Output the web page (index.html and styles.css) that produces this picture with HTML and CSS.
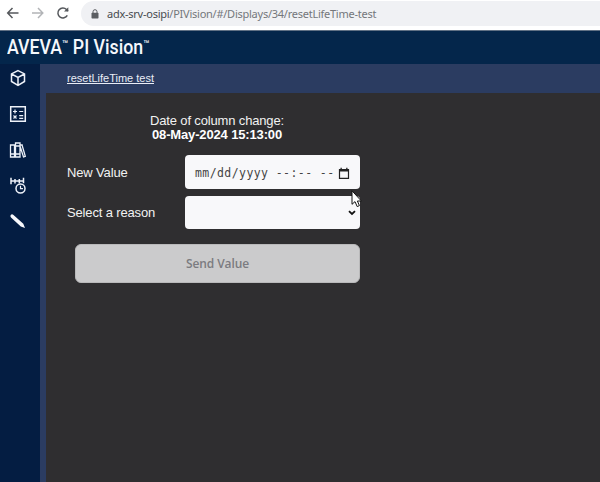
FILE: index.html
```html
<!DOCTYPE html>
<html lang="en">
<head>
<meta charset="utf-8">
<title>AVEVA PI Vision</title>
<link rel="stylesheet" href="styles.css">
</head>
<body>
<div class="browser">
  <svg class="nav" width="14" height="14" viewBox="0 0 14 14"><path d="M12.500 7H2M6.500 2L1.700 7l4.800 5"/></svg>
  <svg class="nav muted" width="14" height="14" viewBox="0 0 14 14"><path d="M1 7h10.500M7 2l4.800 5L7 12"/></svg>
  <svg class="nav reload" width="14" height="14" viewBox="0 0 14 14"><path d="M11.300 9.300A5 5 0 1 1 10.500 3.400L12 5"/><path d="M12.300 1.200v4.300H8z" class="solid"/></svg>
  <div class="address">
    <svg class="lock" width="8" height="10" viewBox="0 0 8 10"><path d="M2 4V2.700a2 2 0 0 1 4 0V4"/><rect x="0.500" y="3.700" width="7" height="5.800" rx="0.700"/></svg>
    <span class="url"><span class="host">adx-srv-osipi</span>/PIVision/#/Displays/34/resetLifeTime-test</span>
  </div>
</div>
<header class="header"><h1 class="brand">AVEVA<span class="tm">™</span> PI Vision<span class="tm">™</span></h1></header>
<div class="workspace">
  <nav class="sidebar">
    <svg width="18" height="18" viewBox="0 0 18 18"><path d="M9 1.700l6.500 3.200v7.600L9 16.300l-6.500-3.800V4.900zM2.500 5L9 8.300 15.500 5M9 8.300v8"/></svg>
    <svg width="18" height="18" viewBox="0 0 18 18"><path d="M1.700 1.700h14.600v14.600H1.700z"/><path class="thin" d="M4 6.500h4M6 4.500v4M10.200 6.500h4M4.500 10.500l3 3M7.500 10.500l-3 3M10.200 10.700h4M10.200 13.300h4"/></svg>
    <svg width="18" height="18" viewBox="0 0 18 18"><path class="books" d="M1.500 4h4v12h-4zM6.500 2H11v14H6.500zM1.500 13H11M6.500 5H11M11 4.300l2-.6 3.300 11.600-1.800.7L11 5"/></svg>
    <svg width="18" height="18" viewBox="0 0 18 18"><path d="M2 .8v6.500M6 2v4.500M10.300 2v4.500M14.500.8v5.500M2 4h12.500"/><circle cx="11.500" cy="11.500" r="4.500"/><path class="thin" d="M11.500 8.700v3H14"/></svg>
    <svg width="18" height="18" viewBox="0 0 18 18"><path class="pencil" d="M1.700 2Q3 .5 4.500 2l9.800 8.800 1.700 4.200-4.200-1.500L2 4.500Q.9 3.200 1.700 2z"/></svg>
  </nav>
  <section class="display">
    <div class="tabs"><a class="tab">resetLifeTime test</a></div>
    <main class="canvas">
      <div class="changed"><div>Date of column change:</div><strong>08-May-2024 15:13:00</strong></div>
      <div class="row"><span class="label">New Value</span>
        <div class="field date"><span class="mask">mm/dd/yyyy --:-- --</span><svg width="12" height="13" viewBox="0 0 12 13"><path d="M1.500 2.500h9v8.800h-9z"/><path class="top" d="M1 2h10v2.500H1zM2.500.7h1.300V3H2.500zM8.200.7h1.300V3H8.200z"/></svg></div>
      </div>
      <div class="row second"><span class="label">Select a reason</span>
        <div class="field select"><svg width="8" height="6" viewBox="0 0 8 6"><path d="M1 1.200l3 2.800 3-2.800"/></svg></div>
      </div>
      <button class="send" disabled>Send Value</button>
    </main>
  </section>
</div>
<svg class="cursor" width="11" height="18" viewBox="0 0 11 18"><path d="M1 .8v13.500l3-2.700 2.200 5 2.200-1-2-4.600h4z"/></svg>
</body>
</html>
```
FILE: styles.css
```css
* { box-sizing: border-box; }
body { margin: 0; width: 600px; height: 482px; overflow: hidden; background: #2f2e30; color: #f2f2f2; font-family: "Liberation Sans", Arial, sans-serif; }
svg { display: block; flex: none; fill: none; }
.browser { height: 31px; display: flex; padding: 1px 0 3px 6px; background: #fff; border-bottom: 1px solid #617185; }
.nav { margin: 5px 11px 0 0; stroke: #55585c; stroke-width: 1.5; }
.nav.muted { stroke: #b2b4b7; }
.nav.reload { margin-right: 11px; }
.solid { fill: #55585c; stroke: none; }
.address { flex: 1; height: 25px; display: flex; align-items: center; padding-left: 10px; border-radius: 13px 0 0 13px; background: #f0f1f4; }
.lock { margin-right: 8px; stroke: #5b5e62; }
.lock rect { fill: #5b5e62; stroke: none; }
.url { color: #74777b; font: 11px/20px "Noto Sans", "Open Sans", sans-serif; letter-spacing: -0.25px; white-space: nowrap; }
.host { color: #494c50; }
.header { height: 33px; padding-left: 7px; background: #04264b; }
.brand { width: max-content; margin: 0; color: #f6f8fc; font: 500 19.5px/34px Roboto, sans-serif; white-space: nowrap; transform: scaleX(0.91); transform-origin: left; }
.tm { font-size: 11px; line-height: 0; vertical-align: 6px; }
.workspace { display: flex; height: 418px; }
.sidebar { width: 40px; padding: 5px 0 0 9px; background: #041d42; display: flex; flex-direction: column; gap: 18px; }
.sidebar svg { stroke: #eef2f9; stroke-width: 1.5; }
.sidebar .thin { stroke-width: 1.2; }
.sidebar .books { stroke-width: 1.3; }
.sidebar .pencil { fill: #f7f8fb; stroke: none; }
.display { flex: 1; display: flex; flex-direction: column; background: #2b3c61; padding-left: 6px; }
.tabs { height: 29px; padding-left: 21px; }
.tab { color: #e9edf6; font-size: 11px; line-height: 29px; text-decoration: underline; }
.canvas { flex: 1; background: #2f2e30; padding: 21px 0 0 21px; font-size: 13px; letter-spacing: -0.15px; }
.changed { width: 300px; text-align: center; line-height: 14px; }
.changed strong { display: block; color: #fff; }
.row { display: flex; align-items: center; margin-top: 13px; }
.row.second { margin-top: 7px; }
.label { width: 118px; }
.field { width: 175px; height: 34px; border-radius: 4px; background: #f8f8fa; display: flex; align-items: center; }
.second .field { height: 33px; }
.date { padding: 2px 0 0 10px; }
.mask { width: 143px; color: #444; font: 11.5px/16px "DejaVu Sans Mono", monospace; letter-spacing: 0.42px; white-space: pre; }
.date svg { stroke: #222; stroke-width: 1.2; }
.date .top { fill: #222; stroke: none; }
.select { justify-content: flex-end; padding-right: 4px; }
.select svg { stroke: #111; stroke-width: 1.8; }
.send { display: block; width: 285px; height: 39px; margin: 15px 0 0 8px; padding: 0; border: 1px solid #b9b9ba; border-radius: 6px; background: #cbcbcc; color: #7b7b80; font: 600 12px "Open Sans", sans-serif; letter-spacing: -0.1px; }
.cursor { position: absolute; left: 351px; top: 190px; fill: #fff; stroke: #111; stroke-width: 1; }
```
